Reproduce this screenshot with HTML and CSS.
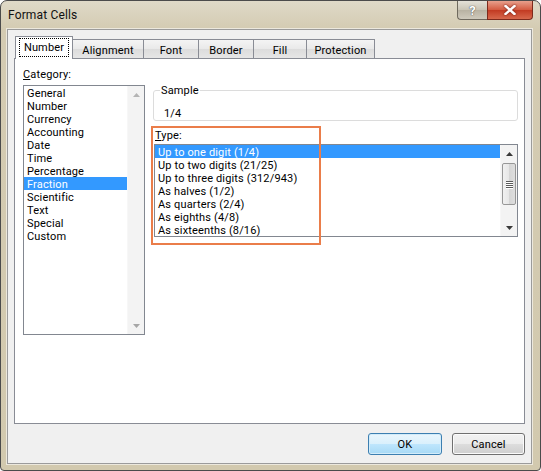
FILE: index.html
```html
<!DOCTYPE html>
<html>
<head>
<meta charset="utf-8">
<title>Format Cells</title>
<link rel="stylesheet" href="styles.css">
</head>
<body>
<div class="window">
  <div class="titlebar">
    <span class="title">Format Cells</span>
    <div class="caption-btns">
      <div class="cbtn help">?</div>
      <div class="cbtn close">
        <svg width="12" height="10" viewBox="0 0 12 10"><path d="M1.5 1 L10.5 9 M10.5 1 L1.5 9" stroke="#fff" stroke-width="2.4" stroke-linecap="square"/></svg>
      </div>
    </div>
  </div>
  <div class="client">
    <div class="tabs">
      <div class="tab active t-number"><span class="focus">Number</span></div>
      <div class="tab t-align">Alignment</div>
      <div class="tab t-font">Font</div>
      <div class="tab t-border">Border</div>
      <div class="tab t-fill">Fill</div>
      <div class="tab t-prot">Protection</div>
    </div>
    <div class="panel">
      <div class="col-left">
        <div class="label"><u>C</u>ategory:</div>
        <div class="listbox cat">
          <div class="items">
            <div class="item">General</div>
            <div class="item">Number</div>
            <div class="item">Currency</div>
            <div class="item">Accounting</div>
            <div class="item">Date</div>
            <div class="item">Time</div>
            <div class="item">Percentage</div>
            <div class="item selected">Fraction</div>
            <div class="item">Scientific</div>
            <div class="item">Text</div>
            <div class="item">Special</div>
            <div class="item">Custom</div>
          </div>
          <div class="vscroll disabled">
            <div class="arrow"><svg width="7" height="4" viewBox="0 0 7 4"><path d="M0 4 L3.5 0 L7 4 Z" fill="#b4b4b4"/></svg></div>
            <div class="track"></div>
            <div class="arrow"><svg width="7" height="4" viewBox="0 0 7 4"><path d="M0 0 L7 0 L3.5 4 Z" fill="#a6a6a6"/></svg></div>
          </div>
        </div>
      </div>
      <div class="col-right">
        <fieldset class="sample">
          <legend>Sample</legend>
          <div class="sample-value">1/4</div>
        </fieldset>
        <div class="type-area">
          <div class="label type-label"><u>T</u>ype:</div>
          <div class="listbox type">
            <div class="items">
              <div class="item selected">Up to one digit (1/4)</div>
              <div class="item">Up to two digits (21/25)</div>
              <div class="item">Up to three digits (312/943)</div>
              <div class="item">As halves (1/2)</div>
              <div class="item">As quarters (2/4)</div>
              <div class="item">As eighths (4/8)</div>
              <div class="item">As sixteenths (8/16)</div>
            </div>
            <div class="vscroll">
              <div class="arrow"><svg width="7" height="4" viewBox="0 0 7 4"><path d="M0 4 L3.5 0 L7 4 Z" fill="#3a3a3a"/></svg></div>
              <div class="thumb">
                <div class="grip"></div><div class="grip"></div><div class="grip"></div><div class="grip"></div>
              </div>
              <div class="track"></div>
              <div class="arrow"><svg width="7" height="4" viewBox="0 0 7 4"><path d="M0 0 L7 0 L3.5 4 Z" fill="#3a3a3a"/></svg></div>
            </div>
          </div>
          <div class="highlight"></div>
        </div>
      </div>
    </div>
    <div class="buttons">
      <div class="btn default">OK</div>
      <div class="btn">Cancel</div>
    </div>
  </div>
</div>
</body>
</html>
```

FILE: styles.css
```css
* { box-sizing: border-box; }
html, body { margin: 0; padding: 0; background: #ffffff; }
body {
  font-family: Roboto, "Liberation Sans", sans-serif;
  font-size: 11px;
  letter-spacing: 0.15px;
  color: #000;
}
.window {
  width: 541px;
  height: 471px;
  border: 1px solid #4b4b4b;
  border-radius: 7px 7px 4px 4px;
  background: linear-gradient(to bottom, #dfd9c8 0px, #d4cbb2 28px, #d2c9ae 100%);
  display: flex;
  flex-direction: column;
  overflow: hidden;
}
.titlebar {
  height: 28px;
  flex: none;
  display: flex;
  justify-content: space-between;
  align-items: flex-start;
  padding-left: 7px;
}
.title {
  font-size: 12px;
  line-height: 29px;
  color: #111;
}
.caption-btns {
  display: flex;
  margin-right: 7px;
}
.cbtn {
  height: 19px;
  border: 1px solid #6f6a5e;
  border-top: none;
  display: flex;
  align-items: center;
  justify-content: center;
}
.help {
  width: 30px;
  border-radius: 0 0 0 4px;
  border-right: none;
  background: linear-gradient(to bottom, #e4e1d8, #c9c4b5 50%, #b8b2a2 51%, #cfcabc);
  color: #fff;
  font-weight: bold;
  font-size: 13px;
  text-shadow: 0 0 1px #555, 0 0 1px #555;
}
.close {
  width: 46px;
  border-radius: 0 0 4px 0;
  border-color: #7d2a1c;
  background: linear-gradient(to bottom, #e8a08c, #d35a40 50%, #c23a22 51%, #d7684c);
}
.close svg { filter: drop-shadow(0 0 1px #6a1a10); }
.client {
  flex: 1;
  margin: 0 8px 6px 6px;
  border: 1px solid #9b9b9b;
  box-shadow: 0 0 0 1px #ece8dd;
  background: #f0f0f0;
  padding: 6px 6px 0 6px;
  display: flex;
  flex-direction: column;
}
.tabs {
  height: 22px;
  flex: none;
  display: flex;
  align-items: flex-end;
  margin-left: 1px;
  position: relative;
  z-index: 1;
}
.tab {
  height: 19px;
  border: 1px solid #898c95;
  border-bottom: none;
  background: linear-gradient(to bottom, #f4f4f4, #e9e9e9 50%, #dcdcdc 51%, #e6e6e6);
  margin-left: -1px;
  display: flex;
  align-items: center;
  justify-content: center;
  line-height: 13px;
  padding-top: 2px;
}
.tab.active {
  margin-left: 0;
  height: 23px;
  margin-bottom: -1px;
  background: #fff;
  position: relative;
  z-index: 2;
  padding-top: 0;
  padding-bottom: 1px;
}
.t-number { width: 58px; }
.t-align { width: 72px; }
.t-font { width: 56px; }
.t-border { width: 56px; }
.t-fill { width: 54px; }
.t-prot { width: 69px; }
.focus {
  outline: 1px dotted #000;
  outline-offset: 0;
  padding: 2px 4px 2px 4px;
  line-height: 13px;
}
.panel {
  flex: none;
  height: 366px;
  background: #fff;
  border: 1px solid #898c95;
  display: flex;
  padding: 8px 0 0 8px;
}
.label {
  line-height: 15px;
  height: 13px;
}
.col-left {
  width: 122px;
  flex: none;
}
.listbox {
  border: 1px solid #828790;
  display: flex;
  background: #fff;
}
.listbox.cat {
  margin-top: 5px;
  height: 250px;
}
.items {
  flex: 1;
  min-width: 0;
}
.item {
  height: 13px;
  line-height: 15px;
  padding-left: 3px;
  white-space: nowrap;
}
.item.selected {
  background: #3399ff;
  color: #fff;
}
.vscroll {
  width: 17px;
  flex: none;
  display: flex;
  flex-direction: column;
  background: #f3f3f3;
  border-left: 1px solid #f7f7f7;
}
.vscroll .arrow {
  height: 17px;
  flex: none;
  display: flex;
  align-items: center;
  justify-content: center;
}
.vscroll .track { flex: 1; }
.vscroll .thumb {
  flex: none;
  height: 42px;
  margin: 1px 1px 0 1px;
  border: 1px solid #979797;
  border-radius: 2px;
  background: linear-gradient(to right, #f0f0f0, #e6e6e6 50%, #d5d5d5 51%, #dedede);
  display: flex;
  flex-direction: column;
  align-items: center;
  justify-content: center;
  gap: 1px;
}
.grip {
  width: 7px;
  height: 1px;
  background: #5a5a5a;
  box-shadow: 0 1px 0 #ffffff;
}
.col-right {
  margin-left: 8px;
  width: 365px;
  flex: none;
  padding-top: 16px;
}
.sample {
  margin: 0;
  padding: 0 0 0 6px;
  border: 1px solid #dcdcdc;
  border-radius: 3px;
  min-width: 0;
}
.sample legend {
  padding: 0 1px;
  line-height: 15px;
}
.sample-value {
  margin-top: 8px;
  padding-left: 4px;
  height: 13px;
  line-height: 15px;
  margin-bottom: 1px;
}
.type-area {
  position: relative;
  margin-top: 7px;
}
.type-label { padding-left: 2px; }
.listbox.type {
  margin-top: 3px;
  margin-left: 1px;
  width: 364px;
  height: 93px;
}
.highlight {
  position: absolute;
  left: -2px;
  top: -2px;
  width: 170px;
  height: 119px;
  border: 2px solid #ea7d4a;
  pointer-events: none;
}
.buttons {
  display: flex;
  justify-content: flex-end;
  gap: 10px;
  margin-top: 9px;
}
.btn {
  width: 73px;
  height: 22px;
  border: 1px solid #707070;
  border-radius: 3px;
  background: linear-gradient(to bottom, #f2f2f2, #ebebeb 50%, #dddddd 51%, #cfcfcf);
  display: flex;
  align-items: center;
  justify-content: center;
  box-shadow: inset 0 0 0 1px #fbfbfb;
}
.btn.default {
  width: 74px;
  border-color: #3c7fb1;
  background: linear-gradient(to bottom, #eaf6fd, #d9f0fc 50%, #bee6fd 51%, #a7d9f5);
  box-shadow: inset 0 0 0 1px #d2ecfa;
}
```
